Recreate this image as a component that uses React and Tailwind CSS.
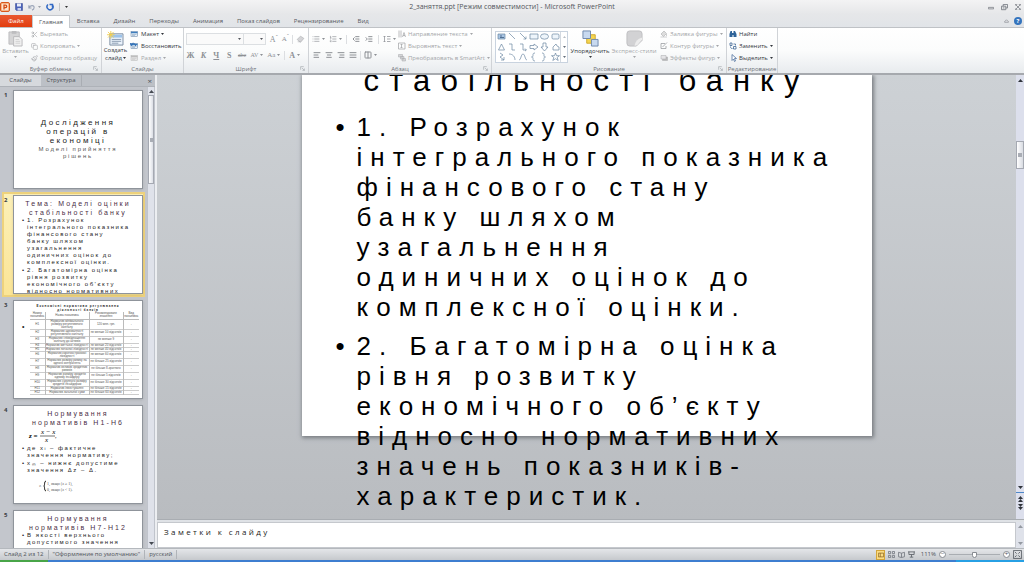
import { useState } from "react";
import {
  AlignCenter,
  AlignJustify,
  AlignLeft,
  AlignRight,
  Columns2,
  Copy,
  IndentDecrease,
  IndentIncrease,
  List,
  ListOrdered,
  Paintbrush,
  Scissors,
} from "lucide-react";

const TABS = ["Главная", "Вставка", "Дизайн", "Переходы", "Анимация", "Показ слайдов", "Рецензирование", "Вид"];

const TITLE = "стабільності банку";

const POINTS = [
  [
    "1. Розрахунок",
    "інтегрального показника",
    "фінансового стану",
    "банку шляхом",
    "узагальнення",
    "одиничних оцінок до",
    "комплексної оцінки.",
  ],
  [
    "2. Багатомірна оцінка",
    "рівня розвитку",
    "економічного об’єкту",
    "відносно нормативних",
    "значень показників-",
    "характеристик.",
  ],
];

const NORMS = [
  ["Н1", "Норматив мінімального розміру регулятивного капіталу", "120 млн. грн."],
  ["Н2", "Норматив адекватності регулятивного капіталу", "не менше 10 відсотків"],
  ["Н3", "Норматив співвідношення капіталу до активів", "не менше 9"],
  ["Н4", "Норматив миттєвої ліквідності", "не менше 20 відсотків"],
  ["Н5", "Норматив поточної ліквідності", "не менше 40 відсотків"],
  ["Н6", "Норматив короткострокової ліквідності", "не менше 60 відсотків"],
  ["Н7", "Норматив розміру ризику на одного контрагента", "не більше 25 відсотків"],
  ["Н8", "Норматив великих кредитних ризиків", "не більше 8-кратного"],
  ["Н9", "Норматив розміру кредитів одному інсайдеру", "не більше 5 відсотків"],
  ["Н10", "Норматив сукупного розміру кредитів інсайдерам", "не більше 30 відсотків"],
  ["Н11", "Норматив інвестування", "не більше 15 відсотків"],
  ["Н12", "Норматив загальної суми", "не більше 60 відсотків"],
];

function Caret({ className = "" }) {
  return (
    <svg viewBox="0 0 6 4" className={`h-[2px] w-[3px] shrink-0 ${className}`} fill="currentColor" aria-hidden="true">
      <path d="M0 0h6L3 4z" />
    </svg>
  );
}

function Arrow({ up }) {
  return (
    <svg viewBox="0 0 5 3" className="h-[3px] w-[5px]" fill="currentColor" aria-hidden="true">
      <path d={up ? "M0 3h5L2.500 0z" : "M0 0h5L2.500 3z"} />
    </svg>
  );
}

function Group({ label, className, launcher, children }) {
  return (
    <section className={`flex shrink-0 flex-col border-r border-[#d0d3d7] ${className}`}>
      <div className="flex flex-1 items-start">{children}</div>
      <div className="relative whitespace-nowrap text-center leading-[8px] text-[#6d7178]">
        {label}
        {launcher && (
          <svg viewBox="0 0 8 8" className="absolute bottom-[2px] right-[3px] h-[5px] w-[5px]" fill="none" stroke="#a2a6ac" aria-hidden="true">
            <path d="M1 6V1h5M3 3l4 4M7 4v3H4" />
          </svg>
        )}
      </div>
    </section>
  );
}

function Cmd({ icon, children, caret, disabled }) {
  return (
    <button type="button" disabled={disabled} className={`flex h-3 items-center gap-[2px] whitespace-nowrap leading-[8px] ${disabled ? "text-[#a4a6a9]" : "text-[#33373d]"}`}>
      {icon}
      <span>{children}</span>
      {caret && <Caret />}
    </button>
  );
}

function IconButton({ label, caret, children }) {
  return (
    <button type="button" aria-label={label} className="flex h-3 min-w-[9px] items-center justify-center gap-[2px] text-[#8d9095]">
      {children}
      {caret && <Caret />}
    </button>
  );
}

function SlideIcon({ gray, back }) {
  return (
    <svg viewBox="0 0 16 16" className="h-[8px] w-[9px] shrink-0" aria-hidden="true">
      <rect x="1" y="3" width="13" height="10" fill={gray ? "#e4e4e4" : "#e8f0f8"} stroke={gray ? "#b5b5b5" : "#58789c"} />
      <path d="M1 5h13" stroke={gray ? "#bdbdbd" : "#3e7ebd"} strokeWidth="3" />
      <path d="M3 9h9M3 11h6" stroke={gray ? "#c4c4c4" : "#7d9bb9"} />
      {back && <path d="M1 5c3-4 9-3 9 3M0 2l1 5 4-2" fill="none" stroke="#2f6fb8" strokeWidth="2" />}
    </svg>
  );
}

function TitleBar() {
  return (
    <header className="grid h-[14px] grid-cols-[1fr_auto_1fr] items-center bg-gradient-to-b from-[#f3f3f4] to-[#e6e7e9]">
      <div className="flex items-center gap-[5px]">
        <svg viewBox="0 0 20 20" className="h-[10px] w-[10px]" aria-hidden="true">
          <rect x="1" y="1" width="18" height="18" rx="3" fill="#f7b789" stroke="#d8571c" strokeWidth="2" />
          <rect x="4" y="4" width="12" height="12" fill="#fbe3d1" />
          <path d="M8 15V6h3a2.500 2.500 0 010 5H8" fill="none" stroke="#d24a12" strokeWidth="2.500" />
        </svg>
        <button type="button" aria-label="Сохранить">
          <svg viewBox="0 0 16 16" className="h-[8px] w-[8px]">
            <path d="M1 1h14v14H3l-2-2z" fill="#4b62b8" stroke="#32458f" />
            <path d="M4 1h8v6H4z" fill="#e8ecf8" />
            <path d="M5 10h7v5H5z" fill="#c9d1ee" />
          </svg>
        </button>
        <button type="button" aria-label="Отменить" className="flex items-center gap-[3px] text-[#9ba0a8]">
          <svg viewBox="0 0 16 16" className="h-[7px] w-[7px]" fill="none" stroke="#9aa4b8" strokeWidth="2.500">
            <path d="M2 3v6h6M2 9c3-7 12-7 12-1 0 3-2 5-5 6" />
          </svg>
          <Caret />
        </button>
        <button type="button" aria-label="Повторить">
          <svg viewBox="0 0 16 16" className="h-[8px] w-[8px]" fill="none" stroke="#3269c4" strokeWidth="3">
            <path d="M4 3a6 6 0 109 1M13 9V3H7" />
          </svg>
        </button>
        <span className="h-[8px] w-px bg-[#c3c5c9]" />
        <Caret className="text-[#333]" />
      </div>
      <h1 className="whitespace-pre text-[7px] leading-[14px] text-[#53565b]">2_заняття.ppt [Режим совместимости] - Microsoft PowerPoint</h1>
      <div className="flex items-center justify-end gap-[7px] pr-[3px] text-[#777b82]">
        <button type="button" aria-label="Свернуть">
          <svg viewBox="0 0 8 8" className="h-[6px] w-[6px]" fill="none" stroke="currentColor"><path d="M.5 4.500h7v2h-7z" /></svg>
        </button>
        <button type="button" aria-label="Восстановить">
          <svg viewBox="0 0 8 8" className="h-[7px] w-[7px]" fill="none" stroke="currentColor"><path d="M2.500 2.500v-2h5v4h-2M.5 2.500h5v4h-5zM2 4.500h2" /></svg>
        </button>
        <button type="button" aria-label="Закрыть">
          <svg viewBox="0 0 8 8" className="h-[6px] w-[6px]" fill="none" stroke="currentColor"><path d="M1 1l6 6M7 1L1 7M.5 2V.5H3M5 .5h2.500V2M.5 6v1.500H3M5 7.500h2.500V6" /></svg>
        </button>
      </div>
    </header>
  );
}

function RibbonTabs({ active, onSelect }) {
  return (
    <nav className="flex h-[14px] items-end border-b border-[#bfc2c6] bg-gradient-to-b from-[#e6e7e9] to-[#e1e4e8] text-[#55585e]">
      <button type="button" className="h-3 w-8 bg-gradient-to-b from-[#e9582f] to-[#e23c0c] text-white">Файл</button>
      {TABS.map((tab) => (
        <button
          key={tab}
          type="button"
          onClick={() => onSelect(tab)}
          className={`whitespace-nowrap ${tab === active ? "-mb-px h-[13px] border border-b-0 border-[#c6c9cd] bg-white px-[6px]" : "h-3 px-[7px]"}`}
        >
          {tab}
        </button>
      ))}
      <div className="ml-auto flex items-center gap-[5px] self-center pr-[2px]">
        <button type="button" aria-label="Свернуть ленту">
          <svg viewBox="0 0 8 6" className="h-[4px] w-[5px]" fill="none" stroke="#7b7f86"><path d="M1 4l3-3 3 3v1H1z" /></svg>
        </button>
        <button type="button" aria-label="Справка" className="flex h-[8px] w-[8px] items-center justify-center rounded-full bg-[#3574bd] text-[6px] font-bold leading-[8px] text-white">?</button>
      </div>
    </nav>
  );
}

function ShapeGallery() {
  return (
    <div className="mt-[3px] flex h-[32px] w-[73px] shrink-0 border border-[#c9d3df] bg-white">
      <svg viewBox="0 0 64 30" className="h-[30px] w-[64px]" fill="none" stroke="#6b86a2" strokeWidth="0.700" role="img" aria-label="Фигуры">
        <path d="M2 2h7v5H2z" fill="#a9c5e4" />
        <path d="M4 4h2M4 5.500h4" stroke="#2d4c70" />
        <path d="M13 1l6 6M24 1l6 6M30 4.500V7h-2.500" />
        <path d="M34 2h8v5h-8z" fill="#eef5fb" />
        <ellipse cx="48.500" cy="4.500" rx="4" ry="2.700" fill="#eef5fb" />
        <rect x="56" y="2" width="7" height="5" rx="1.200" fill="#eef5fb" />
        <path d="M5.500 12l3 6h-6zM13 12h3v6h3M24 12h3v6h3M29 16.500l1.500 1.500-1.500 1M34 13.500h4V12l4 3-4 3v-1.500h-4zM47 11h3v4h2l-3.500 4-3.500-4h2zM57 18v-3l3-3 1 2 2 1v3z" />
        <path d="M4 21l3 2-3 2 4 3M8 25v3H5M13 22c4 0 6 3 6 6M23 28c2 0 2-6 4-6s2 6 4 6M39 21c-2 0-2 1-2 2s0 2-1.500 2c1.500 0 1.500 1 1.500 2s0 2 2 2M46 21c2 0 2 1 2 2s0 2 1.500 2c-1.500 0-1.500 1-1.500 2s0 2-2 2M59.500 21l1 2.700h3l-2.300 1.800 1 3-2.700-1.800-2.700 1.800 1-3-2.300-1.800h3z" />
      </svg>
      <div className="ml-auto flex w-[7px] flex-col items-center justify-around border-l border-[#d3d9e0] text-[#66707c]">
        <svg viewBox="0 0 6 4" className="h-[2px] w-[3px]" fill="#b9bec4"><path d="M0 4h6L3 0z" /></svg>
        <Caret />
        <Caret />
      </div>
    </div>
  );
}

function Ribbon() {
  return (
    <div className="flex h-[45px] bg-gradient-to-b from-white via-[#fbfcfc] to-[#e8ebee]">
      <Group label="Буфер обмена" launcher className="w-[102px]">
        <button type="button" disabled className="flex w-[31px] flex-col items-center pt-[2px] text-[#a4a6a9]">
          <svg viewBox="0 0 16 18" className="h-[17px] w-[15px]" aria-hidden="true">
            <path d="M1 2h11v13H1z" fill="#d5d5d6" stroke="#bcbcbe" />
            <path d="M4 1h5v3H4z" fill="#bdbdbf" />
            <path d="M6 7h6l3 3v7H6z" fill="#f1f1f1" stroke="#b9b9bb" />
            <path d="M8 10h4M8 12h5M8 14h5" stroke="#cfcfcf" />
          </svg>
          <span className="leading-[8px]">Вставить</span>
          <Caret className="mt-px" />
        </button>
        <div>
          <Cmd disabled icon={<Scissors className="h-[7px] w-[7px]" />}>Вырезать</Cmd>
          <Cmd disabled caret icon={<Copy className="h-[7px] w-[7px]" />}>Копировать</Cmd>
          <Cmd disabled icon={<Paintbrush className="h-[7px] w-[7px]" />}>Формат по образцу</Cmd>
        </div>
      </Group>

      <Group label="Слайды" className="w-[82px] text-[#33373d]">
        <button type="button" className="flex w-[27px] flex-col items-center pt-[3px]">
          <svg viewBox="0 0 18 16" className="h-[15px] w-[17px]" aria-hidden="true">
            <path d="M3 3h14v12H3z" fill="#eaf2fb" stroke="#7a8ba0" />
            <path d="M4 4h12v3H4z" fill="#9cc3ea" />
            <path d="M5 9h10M5 11h10M5 13h7" stroke="#8799ae" />
            <path d="M4 0v8M0 4h8M1 1l6 6M7 1L1 7" stroke="#f4cf4c" />
          </svg>
          <span className="leading-[8px]">Создать</span>
          <span className="flex items-center gap-px leading-[8px]">слайд <Caret /></span>
        </button>
        <div className="pl-px">
          <Cmd caret icon={<SlideIcon />}>Макет</Cmd>
          <Cmd icon={<SlideIcon back />}>Восстановить</Cmd>
          <Cmd disabled caret icon={<SlideIcon gray />}>Раздел</Cmd>
        </div>
      </Group>

      <Group label="Шрифт" launcher className="w-[125px]">
        <div className="flex flex-1 flex-col gap-[4px] px-[2px] pt-[5px]">
          <div className="flex items-center">
            <div className="relative">
              <select aria-label="Шрифт" className="block h-[12px] w-[58px] appearance-none border border-[#dcdfe2] bg-[#fafafa]"><option></option></select>
              <Caret className="pointer-events-none absolute right-[3px] top-[5px] text-[#55585e]" />
            </div>
            <div className="relative">
              <select aria-label="Размер шрифта" className="block h-[12px] w-[22px] appearance-none border border-l-0 border-[#dcdfe2] bg-[#fafafa]"><option></option></select>
              <Caret className="pointer-events-none absolute right-[3px] top-[5px] text-[#55585e]" />
            </div>
            <div className="flex flex-1 items-center justify-around pl-[2px] font-['Liberation_Serif']">
              <IconButton label="Увеличить размер"><span className="text-[8px]">A<sup>ˆ</sup></span></IconButton>
              <IconButton label="Уменьшить размер"><span className="text-[7px]">A<sup>ˇ</sup></span></IconButton>
              <span className="h-[9px] w-px bg-[#dcdee1]" />
              <IconButton label="Очистить формат">
                <svg viewBox="0 0 16 16" className="h-[9px] w-[9px]" fill="#d4d4d7" stroke="#a5a7ab"><path d="M2 8l6-6 6 4-6 7zM3 12h5" /></svg>
              </IconButton>
            </div>
          </div>
          <div className="flex items-center justify-between pr-[6px] font-['Liberation_Serif'] text-[8px] leading-[9px]">
            <IconButton label="Полужирный"><b>Ж</b></IconButton>
            <IconButton label="Курсив"><i className="font-bold">К</i></IconButton>
            <IconButton label="Подчеркнутый"><u className="font-bold">Ч</u></IconButton>
            <IconButton label="Тень"><b>S</b></IconButton>
            <IconButton label="Зачеркнутый"><s className="text-[6px]">abc</s></IconButton>
            <IconButton label="Интервал" caret><span className="text-[6px]">AV</span></IconButton>
            <IconButton label="Регистр" caret><span className="text-[7px]">Aa</span></IconButton>
            <span className="h-[9px] w-px bg-[#dcdee1]" />
            <IconButton label="Цвет текста" caret><b>A</b></IconButton>
          </div>
        </div>
      </Group>

      <Group label="Абзац" launcher className="w-[183px]">
        <div className="flex w-[87px] flex-col gap-[4px] pl-[3px] pt-[5px]">
          <div className="flex items-center justify-between">
            <IconButton label="Маркеры" caret><List className="h-[8px] w-[8px]" /></IconButton>
            <IconButton label="Нумерация" caret><ListOrdered className="h-[8px] w-[8px]" /></IconButton>
            <span className="h-[9px] w-px bg-[#dcdee1]" />
            <IconButton label="Уменьшить отступ"><IndentDecrease className="h-[8px] w-[8px]" strokeWidth={3} /></IconButton>
            <IconButton label="Увеличить отступ"><IndentIncrease className="h-[8px] w-[8px]" strokeWidth={3} /></IconButton>
            <span className="h-[9px] w-px bg-[#dcdee1]" />
            <IconButton label="Междустрочный интервал" caret>
              <svg viewBox="0 0 16 16" className="h-[8px] w-[8px]" fill="none" stroke="currentColor" strokeWidth="1.500"><path d="M3 2v12M1 4l2-2 2 2M1 12l2 2 2-2M8 3h7M8 8h7M8 13h7" /></svg>
            </IconButton>
          </div>
          <div className="flex items-center gap-[3px]">
            <IconButton label="По левому краю"><AlignLeft className="h-[8px] w-[8px]" strokeWidth={3} /></IconButton>
            <IconButton label="По центру"><AlignCenter className="h-[8px] w-[8px]" strokeWidth={3} /></IconButton>
            <IconButton label="По правому краю"><AlignRight className="h-[8px] w-[8px]" strokeWidth={3} /></IconButton>
            <IconButton label="По ширине"><AlignJustify className="h-[8px] w-[8px]" strokeWidth={3} /></IconButton>
            <span className="h-[9px] w-px bg-[#dcdee1]" />
            <IconButton label="Колонки" caret><Columns2 className="h-[8px] w-[8px]" strokeWidth={3} /></IconButton>
          </div>
        </div>
        <div className="pl-[2px]">
          <Cmd disabled caret icon={<svg viewBox="0 0 16 16" className="h-[8px] w-[8px]" fill="none" stroke="#a5a7aa" strokeWidth="1.500"><path d="M2 1v14M6 1v14M9 14l3-9 3 9M10 11h4" /></svg>}>Направление текста</Cmd>
          <Cmd disabled caret icon={<svg viewBox="0 0 16 16" className="h-[8px] w-[8px]" fill="none" stroke="#a5a7aa" strokeWidth="1.500"><path d="M1 2h13v12H1zM7 4v8M5 6l2-2 2 2M5 10l2 2 2-2" /></svg>}>Выровнять текст</Cmd>
          <Cmd disabled caret icon={<svg viewBox="0 0 16 16" className="h-[8px] w-[8px]" fill="#d5d6d8" stroke="#a5a7aa"><path d="M1 1h8v5H1zM5 5h7v5H5zM8 9h7v5H8z" /></svg>}>Преобразовать в SmartArt</Cmd>
        </div>
      </Group>

      <Group label="Рисование" launcher className="w-[235px]">
        <div className="pl-[3px]"><ShapeGallery /></div>
        <button type="button" className="flex w-[44px] flex-col items-center pt-[2px] text-[#33373d]">
          <svg viewBox="0 0 18 18" className="h-[17px] w-[17px]" aria-hidden="true">
            <path d="M5 5h9v9H5z" fill="#f5d550" stroke="#cfa92c" />
            <path d="M1 1h8v8H1zM10 10h7v7h-7z" fill="#c8d9ef" stroke="#6d87ab" />
          </svg>
          <span className="leading-[8px]">Упорядочить</span>
          <Caret className="mt-px" />
        </button>
        <button type="button" disabled className="flex w-[44px] flex-col items-center pt-[2px] text-[#a4a6a9]">
          <svg viewBox="0 0 18 18" className="h-[17px] w-[17px]" aria-hidden="true">
            <path d="M4 1h10q3 0 3 3v7l-6 6H4q-3 0-3-3V4q0-3 3-3z" fill="#d2d2d4" stroke="#bebec0" />
            <path d="M17 8q-7 2-8 9l3-1 5-6z" fill="#ececec" />
          </svg>
          <span className="whitespace-nowrap leading-[8px]">Экспресс-стили</span>
          <Caret className="mt-px" />
        </button>
        <div className="pl-[4px]">
          <Cmd disabled caret icon={<svg viewBox="0 0 16 16" className="h-[8px] w-[8px]" fill="#ddd" stroke="#a0a2a5"><path d="M2 8l6-6 5 5-6 6zM1 14h13M13 8v4" /></svg>}>Заливка фигуры</Cmd>
          <Cmd disabled caret icon={<svg viewBox="0 0 16 16" className="h-[8px] w-[8px]" fill="none" stroke="#96989c" strokeWidth="1.500"><path d="M2 3h8M2 3v10h10V8M5 10l9-9" /></svg>}>Контур фигуры</Cmd>
          <Cmd disabled caret icon={<svg viewBox="0 0 16 16" className="h-[8px] w-[8px]" fill="#e4e4e6" stroke="#a8aaad"><path d="M5 6h10v7H5z" fill="#bbb" /><path d="M2 3h10v7H2z" /></svg>}>Эффекты фигур</Cmd>
        </div>
      </Group>

      <Group label="Редактирование" className="w-[51px]">
        <div className="pl-[2px]">
          <Cmd icon={<svg viewBox="0 0 16 16" className="h-[8px] w-[8px]" fill="#2f6398"><path d="M3 2h3v4h3V2h3l3 6v6H9v-4H7v4H1V8z" /></svg>}>Найти</Cmd>
          <Cmd caret icon={<svg viewBox="0 0 16 16" className="h-[8px] w-[8px]" fill="none" stroke="#355f8f" strokeWidth="1.500"><path d="M2 2h4v5H2zM9 9h5v5H9zM3 9c0 4 2 4 4 4M9 4h4v3" /></svg>}>Заменить</Cmd>
          <Cmd caret icon={<svg viewBox="0 0 16 16" className="h-[8px] w-[8px]" fill="#fff" stroke="#45699a" strokeWidth="1.500"><path d="M6 1v12l3-3 2 5 2-1-2-5h4z" /></svg>}>Выделить</Cmd>
        </div>
      </Group>
    </div>
  );
}

function ThumbBullets({ items }) {
  return (
    <ul className="text-[6px] leading-[7px] tracking-[0.25em]">
      {items.map((lines) => (
        <li key={lines[0]} className="relative mb-px pl-[13px]">
          <span className="absolute left-[8px] top-0">•</span>
          {lines.map((line) => (
            <span key={line} className="block whitespace-nowrap">{line}</span>
          ))}
        </li>
      ))}
    </ul>
  );
}

function ThumbTitle({ lines }) {
  return (
    <h2 className="text-center text-[7px] leading-[9px] tracking-[0.3em] text-[#4a2e45]">
      {lines.map((line) => (
        <span key={line} className="block whitespace-nowrap">{line}</span>
      ))}
    </h2>
  );
}

function NormsTable() {
  return (
    <div className="relative px-[4px] pt-[3px] text-[3px] leading-[3px]">
      <h2 className="text-center font-bold leading-[4px] tracking-[0.3em]">
        Економічні нормативи регулювання
        <span className="block">діяльності банків</span>
      </h2>
      <span className="absolute left-[8px] top-[22px] text-[7px] leading-[7px]">•</span>
      <table className="ml-[12px] w-[109px] table-fixed border-collapse text-center text-[#555]">
        <thead>
          <tr className="border-b border-[#bbb]">
            <th className="h-[7px] w-[15px] p-0 font-normal">Номер показника</th>
            <th className="w-[44px] border-l border-[#bbb] p-0 font-normal">Назва показника</th>
            <th className="w-[34px] border-l border-[#bbb] p-0 font-normal">Рекомендоване значення</th>
            <th className="border-l border-[#bbb] p-0 font-normal">Вид показника</th>
          </tr>
        </thead>
        <tbody>
          {NORMS.map(([id, name, value]) => (
            <tr key={id} className="border-b border-[#ccc]">
              <td className="p-0">{id}</td>
              <td className="border-l border-[#bbb] p-0">{name}</td>
              <td className="whitespace-nowrap border-l border-[#bbb] p-0">{value}</td>
              <td className="border-l border-[#bbb] p-0">-</td>
            </tr>
          ))}
        </tbody>
      </table>
    </div>
  );
}

function FormulaSlide() {
  return (
    <div className="pt-[3px]">
      <ThumbTitle lines={["Нормування", "нормативів Н1-Н6"]} />
      <svg viewBox="0 0 40 18" className="ml-[13px] h-[18px] w-[40px] font-['Liberation_Serif'] italic" role="img" aria-label="Формула">
        <text x="2" y="11" fontSize="7" fontWeight="bold">z =</text>
        <text x="14" y="7" fontSize="7">x − x</text>
        <path d="M13 9h15" stroke="#333" strokeWidth="0.700" />
        <text x="18" y="15" fontSize="7">x</text>
        <text x="28" y="11" fontSize="6">,</text>
      </svg>
      <ThumbBullets items={[["де xᵢ – фактичне", "значення нормативу;"], ["xₘ – нижнє допустиме", "значення Δz – Δ."]]} />
      <svg viewBox="0 0 44 14" className="ml-[24px] mt-[5px] h-[14px] w-[44px] font-['Liberation_Serif']" role="img" aria-label="Система">
        <text x="1" y="8" fontSize="5" fill="#777">z</text>
        <path d="M8 2c-2 0-1 4-2 5 1 1 0 5 2 5" fill="none" stroke="#222" />
        <text x="9" y="6" fontSize="4" fill="#555">1, якщо (z ≥ 1),</text>
        <text x="9" y="12" fontSize="4" fill="#555">0, якщо (z &lt; 1).</text>
      </svg>
    </div>
  );
}

const THUMBS = [
  <div key="a" className="flex h-full flex-col items-center pt-[27px] text-center">
    <h2 className="text-[8px] leading-[9px] tracking-[0.3em]">Дослідження<br />операцій в<br />економіці</h2>
    <p className="mt-px text-[6px] leading-[7px] tracking-[0.3em] text-[#555]">Моделі прийняття<br />рішень</p>
  </div>,
  <div key="b" className="pt-[3px]">
    <ThumbTitle lines={["Тема: Моделі оцінки", "стабільності банку"]} />
    <ThumbBullets items={[POINTS[0], POINTS[1].slice(0, 4)]} />
  </div>,
  <NormsTable key="c" />,
  <FormulaSlide key="d" />,
  <div key="e" className="pt-[3px]">
    <ThumbTitle lines={["Нормування", "нормативів Н7-Н12"]} />
    <ThumbBullets items={[["В якості верхнього", "допустимого значення"]]} />
  </div>,
];

function SlidePanel({ current, onSelect }) {
  return (
    <aside className="flex w-[155px] shrink-0 flex-col bg-[#c3c6cc]">
      <div className="flex h-[12px] shrink-0 items-stretch border-b border-[#aeb2b8] bg-[#bcc0c6] text-[#4c5057]">
        <button type="button" className="w-[41px] bg-[#d6d9dd]">Слайды</button>
        <button type="button" className="w-[41px] border-r border-[#a9adb3]">Структура</button>
        <button type="button" aria-label="Закрыть панель" className="ml-auto px-[3px] text-[8px] leading-[10px]">×</button>
      </div>
      <div className="flex min-h-0 flex-1">
        <ol className="flex flex-1 flex-col overflow-hidden">
          {THUMBS.map((content, i) => (
            <li key={i}>
              <button
                type="button"
                onClick={() => onSelect(i)}
                className={`ml-[2px] flex w-[143px] items-start border-2 py-px text-left ${
                  i === current ? "border-[#eed27c] bg-gradient-to-b from-[#fcf0b8] to-[#fbe596]" : "border-transparent"
                }`}
              >
                <span className="w-[9px] text-[6px] font-bold leading-[11px] text-[#3b3e44]">{i + 1}</span>
                <span className="block h-[99px] w-[130px] shrink-0 overflow-hidden border border-[#8f949b] bg-white font-['Liberation_Sans'] text-[#222] shadow">{content}</span>
              </button>
            </li>
          ))}
        </ol>
        <div className="flex w-[8px] flex-col items-center justify-between border-x border-[#c0c4cc] bg-[#dfe2ea] py-[3px] text-[#454a52]">
          <Arrow up />
          <div className="mt-[2px] flex h-[89px] w-full items-center justify-center border border-[#a5a9b2] bg-gradient-to-r from-white to-[#dcdfe6]">
            <span className="h-[4px] w-[3px] bg-[#a9adb5]" />
          </div>
          <span className="flex-1" />
          <Arrow />
        </div>
      </div>
    </aside>
  );
}

function Editor() {
  return (
    <section className="flex min-h-0 flex-1 border-b border-[#a9adb2]">
      <div className="flex min-w-0 flex-1 justify-center overflow-hidden bg-gradient-to-b from-[#cdd1d5] to-[#b9bcc0]">
        <article className="h-[361px] w-[570px] shrink-0 bg-white font-['Liberation_Sans'] text-black shadow-[1px_1px_4px_1px_#777b80]">
          <h2 className="-mt-[12px] text-center text-[31px] leading-[36px] tracking-[10px]">{TITLE}</h2>
          <ul className="mt-[13px] flex flex-col gap-[9px] text-[26px] leading-[30px] tracking-[8px]">
            {POINTS.map((lines) => (
              <li key={lines[0]} className="flex">
                <span className="w-[55px] shrink-0 pl-[34px]">•</span>
                <span>
                  {lines.map((line) => (
                    <span key={line} className="block whitespace-nowrap">{line}</span>
                  ))}
                </span>
              </li>
            ))}
          </ul>
        </article>
      </div>
      <div className="flex w-[8px] flex-col items-center bg-[#dcdfec] pt-[4px] text-[#30343b]">
        <Arrow up />
        <div className="mt-[59px] flex h-[28px] w-full items-center justify-center border border-[#a5a9b2] bg-gradient-to-r from-white to-[#d8dbe2]">
          <span className="h-[4px] w-[4px] bg-[#a9adb5]" />
        </div>
        <div className="mt-auto flex w-full flex-col items-center">
          <Arrow />
          <div className="mt-[3px] flex w-full flex-col items-center gap-[2px] border-t border-[#4d87c9] pb-[9px] pt-[3px]">
            <button type="button" aria-label="Предыдущий слайд"><Arrow up /><Arrow up /></button>
            <button type="button" aria-label="Следующий слайд"><Arrow /><Arrow /></button>
          </div>
        </div>
      </div>
    </section>
  );
}

function StatusBar() {
  const [zoom, setZoom] = useState(50);

  return (
    <footer className="flex h-[12px] shrink-0 items-center border-t border-[#b4b8bd] bg-gradient-to-b from-[#e4e6e9] to-[#c6c9cd] text-[#50545a]">
      <span className="border-r border-[#b0b4b9] px-[4px]">Слайд 2 из 12</span>
      <span className="border-r border-[#b0b4b9] px-[4px]">"Оформление по умолчанию"</span>
      <span className="border-r border-[#b0b4b9] px-[4px]">русский</span>
      <div className="ml-auto flex items-center gap-[3px] pr-[2px]">
        <button type="button" aria-label="Обычный" className="flex h-[10px] w-[9px] items-center justify-center border border-[#d4a53a] bg-[#fbdc83]">
          <svg viewBox="0 0 8 8" className="h-[6px] w-[6px]" fill="none" stroke="#8b6421"><path d="M.5 1.500h7v5h-7zM3 1.500v5" /></svg>
        </button>
        <button type="button" aria-label="Сортировщик слайдов">
          <svg viewBox="0 0 8 8" className="h-[7px] w-[7px]" fill="none" stroke="#777c83"><path d="M.5.5h2.500v2.500H.5zM5 .5h2.500v2.500H5zM.5 5h2.500v2.500H.5zM5 5h2.500v2.500H5z" /></svg>
        </button>
        <button type="button" aria-label="Режим чтения">
          <svg viewBox="0 0 8 8" className="h-[7px] w-[7px]" fill="none" stroke="#777c83"><path d="M.5 1.500L4 2.500l3.500-1v5L4 7.500l-3.500-1zM4 2.500v5" /></svg>
        </button>
        <button type="button" aria-label="Показ слайдов">
          <svg viewBox="0 0 8 8" className="h-[7px] w-[7px]" fill="none" stroke="#60656c"><path d="M0 1h8M1 1v3h6V1M4 4v3M2 7h4" /></svg>
        </button>
        <span className="w-[18px] text-right">111%</span>
        <button type="button" aria-label="Уменьшить" className="h-[7px] w-[7px] rounded-full border border-[#888c92] bg-white text-[6px] leading-[5px]">−</button>
        <input
          type="range"
          aria-label="Масштаб"
          value={zoom}
          onChange={(e) => setZoom(Number(e.target.value))}
          className="h-px w-[51px] appearance-none bg-[#a9adb2] [&::-webkit-slider-thumb]:h-[6px] [&::-webkit-slider-thumb]:w-[5px] [&::-webkit-slider-thumb]:appearance-none [&::-webkit-slider-thumb]:rounded-b-full [&::-webkit-slider-thumb]:border [&::-webkit-slider-thumb]:border-[#878b91] [&::-webkit-slider-thumb]:bg-white"
        />
        <button type="button" aria-label="Увеличить" className="h-[7px] w-[7px] rounded-full border border-[#888c92] bg-white text-[6px] leading-[5px]">+</button>
        <button type="button" aria-label="Вписать в окно">
          <svg viewBox="0 0 10 10" className="h-[9px] w-[9px]" fill="none" stroke="#5f646b"><path d="M.5.5h9v9h-9zM2 2l2 2M8 2L6 4M2 8l2-2M8 8L6 6" /></svg>
        </button>
      </div>
    </footer>
  );
}

export default function App() {
  const [tab, setTab] = useState("Главная");
  const [slide, setSlide] = useState(1);

  return (
    <div className="flex h-screen flex-col overflow-hidden bg-[#dfe2e6] font-['Open_Sans','Noto_Sans',sans-serif] text-[6px] leading-[9px]">
      <TitleBar />
      <RibbonTabs active={tab} onSelect={setTab} />
      <Ribbon />
      <main className="flex min-h-0 flex-1 border-t-2 border-[#a6a9ae]">
        <SlidePanel current={slide} onSelect={setSlide} />
        <div className="flex min-w-0 flex-1 flex-col border-l-2 border-[#eceef1]">
          <Editor />
          <div className="mt-[2px] flex h-[26px] shrink-0 bg-white">
            <textarea
              aria-label="Заметки"
              defaultValue="Заметки к слайду"
              className="block flex-1 resize-none border border-[#c5c8cd] px-[6px] pt-[3px] text-[8px] leading-[12px] tracking-[0.3em] text-[#222] outline-none"
            />
            <div className="flex w-[8px] flex-col items-center justify-between bg-[#dfe2ea] py-[3px] text-[#9499a1]">
              <Arrow up />
              <Arrow />
            </div>
          </div>
        </div>
      </main>
      <StatusBar />
      <div className="flex h-[2px] shrink-0">
        <span className="w-12 bg-[#48a548]" />
        <span className="flex-1 bg-[#3d7ed0]" />
        <span className="w-[68px] bg-[#27a0e4]" />
      </div>
    </div>
  );
}
